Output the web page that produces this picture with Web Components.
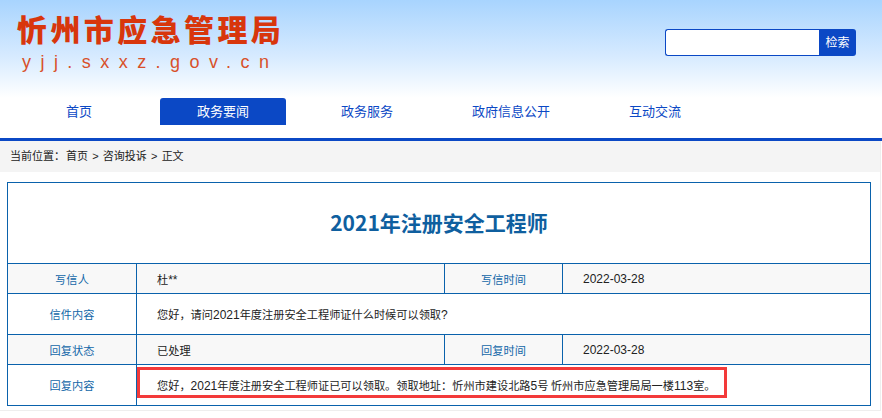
<!DOCTYPE html>
<html lang="zh">
<head>
<meta charset="utf-8">
<title>忻州市应急管理局</title>
<style>
    html, body { margin: 0; padding: 0; background: #fff; }
    body { font-family: "Noto Sans CJK SC", "Liberation Sans", sans-serif; font-size: 13px; width: 882px; height: 418px; overflow: hidden; }
</style>
</head>
<body>
<site-header></site-header>
<page-body>
    <bread-crumb></bread-crumb>
    <letter-detail title-text="2021年注册安全工程师"></letter-detail>
</page-body>

<script>
class SiteHeader extends HTMLElement {
    constructor () {
        super();
        const shadow = this.attachShadow({ mode: 'open' });
        const items = ['首页', '政务要闻', '政务服务', '政府信息公开', '互动交流'];
        shadow.innerHTML = `
        <style>
            :host { display: block; height: 141px; box-sizing: border-box; border-bottom: 3px solid #0b48c5;
                background: linear-gradient(#a8d4fe 0, #d8ebff 58px, #ffffff 98px); }
            .top { display: flex; justify-content: space-between; height: 98px; box-sizing: border-box; padding: 9px 26px 0 17px; }
            .name { font-size: 30px; line-height: 38px; font-weight: 900; letter-spacing: 3.4px; color: #d8360c; white-space: nowrap; }
            .url { font-family: "Liberation Sans", sans-serif; font-size: 18px; line-height: 22px; letter-spacing: 9.45px; color: #d8502a; padding: 4px 0 0 5px; white-space: nowrap; }
            form { display: flex; height: 27px; margin-top: 20px; }
            .box { width: 154px; box-sizing: border-box; background: #fff; border: 1px solid #0b48c5; border-right: 0; border-radius: 3px 0 0 3px; }
            .btn { width: 37px; background: #0b48c5; color: #fff; font-size: 12px; line-height: 26px; text-align: center; border-radius: 0 3px 3px 0; }
            nav { display: grid; grid-template-columns: repeat(5, 144px); height: 27px; padding-left: 7px; }
            a { font-size: 13px; line-height: 26px; text-align: center; color: #0b48c5; }
            a.on { margin: 0 9px; background: #0b48c5; color: #fff; border-radius: 3px 3px 0 0; }
        </style>
        <div class="top">
            <div>
                <div class="name">忻州市应急管理局</div>
                <div class="url">yjj.sxxz.gov.cn</div>
            </div>
            <form><div class="box"></div><div class="btn">检索</div></form>
        </div>
        <nav>${items.map((item, i) => `<a class="${i === 1 ? 'on' : ''}">${item}</a>`).join('')}</nav>`;
    }
}

class PageBody extends HTMLElement {
    constructor () {
        super();
        const shadow = this.attachShadow({ mode: 'open' });
        shadow.innerHTML = `
        <style>
            :host { display: block; width: 881px; height: 270px; box-sizing: border-box; border-right: 1px solid #eee; border-bottom: 1px solid #eee; }
        </style>
        <slot></slot>`;
    }
}

class BreadCrumb extends HTMLElement {
    constructor () {
        super();
        const shadow = this.attachShadow({ mode: 'open' });
        shadow.innerHTML = `
        <style>
            :host { display: block; height: 31px; background: #f4f4f4; padding-left: 10px; font-size: 11px; line-height: 29px; color: #222; white-space: nowrap; }
            span { margin: 0 4.2px; font-family: "Liberation Sans", sans-serif; }
            b { font-weight: 400; margin-right: 1px; }
        </style>
        <b>当前位置：</b>首页<span>&gt;</span>咨询投诉<span>&gt;</span>正文`;
    }
}

class LetterRow extends HTMLElement {
    constructor () {
        super();
        const shadow = this.attachShadow({ mode: 'open' });
        shadow.innerHTML = `
        <style>
            :host { display: grid; grid-template-columns: 129px 1fr; border-top: 1px solid #0a62ac; color: #222; font-size: 11.2px; }
            :host([split]) { grid-template-columns: 129px 307px 1px 118px 1fr; background: #f8f8f8; }
            .label { color: #1367a8; text-align: center; border-right: 1px solid #0a62ac; display: flex; align-items: center; justify-content: center; letter-spacing: .1px; }
            .value { padding-left: 20px; display: flex; align-items: center; white-space: pre; }
            .date { font-family: "Liberation Sans", sans-serif; font-size: 12px; }
            .rule { display: none; background: #0a62ac; }
            .extra { display: none; }
            :host([split]) .extra { display: flex; }
            :host([split]) .rule { display: block; }
        </style>
        <div class="label">${this.getAttribute('label')}</div>
        <div class="value"><span><slot></slot></span></div>
        <div class="rule"></div>
        <div class="label extra">${this.getAttribute('label2') || ''}</div>
        <div class="value date extra">${this.getAttribute('value2') || ''}</div>`;
    }
}

class LetterDetail extends HTMLElement {
    constructor () {
        super();
        const shadow = this.attachShadow({ mode: 'open' });
        shadow.innerHTML = `
        <style>
            :host { display: block; position: relative; width: 864px; height: 224px; box-sizing: border-box; margin: 10px 0 0 7px; border: 1px solid #0a62ac; }
            h1 { margin: 0; height: 80px; font-size: 21px; line-height: 78px; font-weight: 700; text-align: center; color: #0f5f9f; }
            .mark { position: absolute; left: 129px; top: 184px; width: 590px; height: 31px; box-sizing: border-box; border: 3px solid #f33a3a; pointer-events: none; }
            .n { font-family: "Liberation Sans", sans-serif; font-size: 12px; }
            letter-row:nth-of-type(1), letter-row:nth-of-type(3) { height: 29px; }
            letter-row:nth-of-type(2), letter-row:nth-of-type(4) { height: 40px; }
        </style>
        <h1>${this.getAttribute('title-text')}</h1>
        <letter-row split label="写信人" label2="写信时间" value2="2022-03-28">杜<span class="n">**</span></letter-row>
        <letter-row label="信件内容">您好，请问<span class="n">2021</span>年度注册安全工程师证什么时候可以领取<span class="n">?</span></letter-row>
        <letter-row split label="回复状态" label2="回复时间" value2="2022-03-28">已处理</letter-row>
        <letter-row label="回复内容">您好，<span class="n">2021</span>年度注册安全工程师证已可以领取。领取地址：忻州市建设北路<span class="n">5</span>号 忻州市应急管理局局一楼<span class="n">113</span>室。</letter-row>
        <div class="mark"></div>`;
    }
}

customElements.define('site-header', SiteHeader);
customElements.define('page-body', PageBody);
customElements.define('bread-crumb', BreadCrumb);
customElements.define('letter-row', LetterRow);
customElements.define('letter-detail', LetterDetail);
</script>
</body>
</html>
